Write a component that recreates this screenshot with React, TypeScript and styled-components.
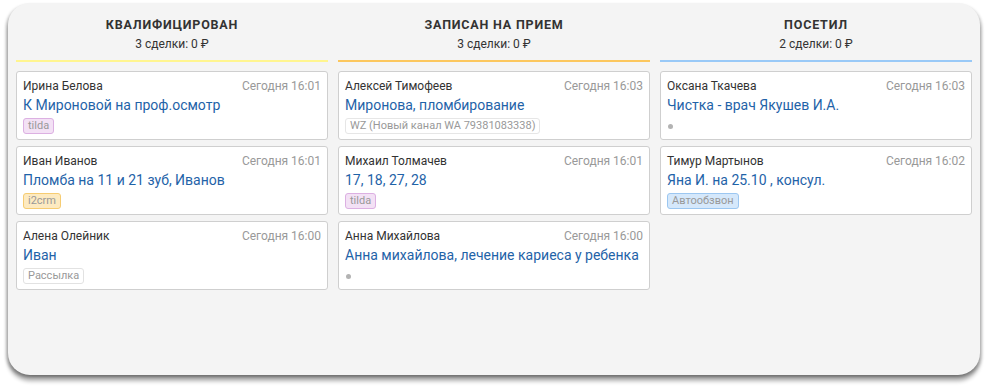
import * as React from 'react';
import styled, { createGlobalStyle } from 'styled-components';

const GlobalStyle = createGlobalStyle`
  html, body {
    margin: 0;
    padding: 0;
    background: #ffffff;
  }
  body {
    font-family: Roboto, "Liberation Sans", sans-serif;
  }
`;

const PAGE = styled.div`
  padding: 3px 9px 12px 8px;
`;

const BOARD = styled.div`
  height: 372px;
  background: #f4f4f4;
  border-radius: 22px;
  box-shadow: 0 6px 4px rgba(0, 0, 0, 0.32), -2px 2px 3px rgba(0, 0, 0, 0.22),
    2px 2px 3px rgba(0, 0, 0, 0.18);
  padding: 0 8px;
  display: grid;
  grid-template-columns: repeat(3, 312px);
  column-gap: 10px;
  box-sizing: border-box;
`;

const COLUMN = styled.div`
  display: flex;
  flex-direction: column;
`;

const COLUMNHEAD = styled.div<{ $line: string }>`
  height: 59px;
  border-bottom: 2px solid ${(p) => p.$line};
  display: flex;
  flex-direction: column;
  align-items: center;
  padding-top: 14px;
  box-sizing: border-box;
  margin-bottom: 9px;
`;

const COLUMNTITLE = styled.div`
  font-size: 12.5px;
  font-weight: bold;
  letter-spacing: 0.8px;
  color: #333;
  line-height: 16px;
`;

const COLUMNSUM = styled.div`
  font-size: 12px;
  color: #333;
  margin-top: 3px;
  line-height: 16px;
`;

const CARDLIST = styled.div`
  display: flex;
  flex-direction: column;
  gap: 6px;
`;

const CARD = styled.div`
  background: #fff;
  border: 1px solid #cfcfcf;
  border-radius: 3px;
  height: 69px;
  box-sizing: border-box;
  padding: 6px 6px 0 6px;
`;

const CARDTOP = styled.div`
  display: flex;
  justify-content: space-between;
  font-size: 12px;
  line-height: 16px;
`;

const CARDNAME = styled.span`
  color: #333;
`;

const CARDDATE = styled.span`
  color: #999;
`;

const CARDTITLE = styled.div`
  color: #1f63a8;
  font-size: 14px;
  line-height: 20px;
  margin-top: 1px;
  white-space: nowrap;
`;

const TAGROW = styled.div`
  display: flex;
  align-items: center;
  height: 16px;
  margin-top: 3px;
`;

const TAG = styled.span<{ $bg: string; $border: string }>`
  font-size: 11px;
  line-height: 14px;
  padding: 0 4px;
  color: #999;
  background: ${(p) => p.$bg};
  border: 1px solid ${(p) => p.$border};
  border-radius: 3px;
`;

const DOT = styled.span`
  width: 5px;
  height: 5px;
  border-radius: 50%;
  background: #b3b3b3;
  margin-left: 1px;
`;

type Tag = { text: string; bg: string; border: string } | null;

interface IDeal {
  name: string;
  date: string;
  title: string;
  tag: Tag;
}

const tilda = { text: 'tilda', bg: '#f3e1f5', border: '#dcb0e2' };

const columns: { title: string; sum: string; line: string; deals: IDeal[] }[] = [
  {
    title: 'КВАЛИФИЦИРОВАН',
    sum: '3 сделки: 0 ₽',
    line: '#fff58f',
    deals: [
      { name: 'Ирина Белова', date: 'Сегодня 16:01', title: 'К Мироновой на проф.осмотр', tag: tilda },
      { name: 'Иван Иванов', date: 'Сегодня 16:01', title: 'Пломба на 11 и 21 зуб, Иванов', tag: { text: 'i2crm', bg: '#fdeac0', border: '#f6cc72' } },
      { name: 'Алена Олейник', date: 'Сегодня 16:00', title: 'Иван', tag: { text: 'Рассылка', bg: '#fff', border: '#e2e2e2' } },
    ],
  },
  {
    title: 'ЗАПИСАН НА ПРИЕМ',
    sum: '3 сделки: 0 ₽',
    line: '#fcc75e',
    deals: [
      { name: 'Алексей Тимофеев', date: 'Сегодня 16:03', title: 'Миронова, пломбирование', tag: { text: 'WZ (Новый канал WA 79381083338)', bg: '#fff', border: '#e6e6e6' } },
      { name: 'Михаил Толмачев', date: 'Сегодня 16:01', title: '17, 18, 27, 28', tag: tilda },
      { name: 'Анна Михайлова', date: 'Сегодня 16:00', title: 'Анна михайлова, лечение кариеса у ребенка', tag: null },
    ],
  },
  {
    title: 'ПОСЕТИЛ',
    sum: '2 сделки: 0 ₽',
    line: '#99c9f7',
    deals: [
      { name: 'Оксана Ткачева', date: 'Сегодня 16:03', title: 'Чистка - врач Якушев И.А.', tag: null },
      { name: 'Тимур Мартынов', date: 'Сегодня 16:02', title: 'Яна И. на 25.10 , консул.', tag: { text: 'Автообзвон', bg: '#d5e8fb', border: '#9cc7f1' } },
    ],
  },
];

const App: React.FunctionComponent = () => {
  return (
    <PAGE>
      <GlobalStyle />
      <BOARD>
        {columns.map((col) => (
          <COLUMN key={col.title}>
            <COLUMNHEAD $line={col.line}>
              <COLUMNTITLE>{col.title}</COLUMNTITLE>
              <COLUMNSUM>{col.sum}</COLUMNSUM>
            </COLUMNHEAD>
            <CARDLIST>
              {col.deals.map((deal) => (
                <CARD key={deal.name}>
                  <CARDTOP>
                    <CARDNAME>{deal.name}</CARDNAME>
                    <CARDDATE>{deal.date}</CARDDATE>
                  </CARDTOP>
                  <CARDTITLE>{deal.title}</CARDTITLE>
                  <TAGROW>
                    {deal.tag ? (
                      <TAG $bg={deal.tag.bg} $border={deal.tag.border}>
                        {deal.tag.text}
                      </TAG>
                    ) : (
                      <DOT />
                    )}
                  </TAGROW>
                </CARD>
              ))}
            </CARDLIST>
          </COLUMN>
        ))}
      </BOARD>
    </PAGE>
  );
};

export default App;
